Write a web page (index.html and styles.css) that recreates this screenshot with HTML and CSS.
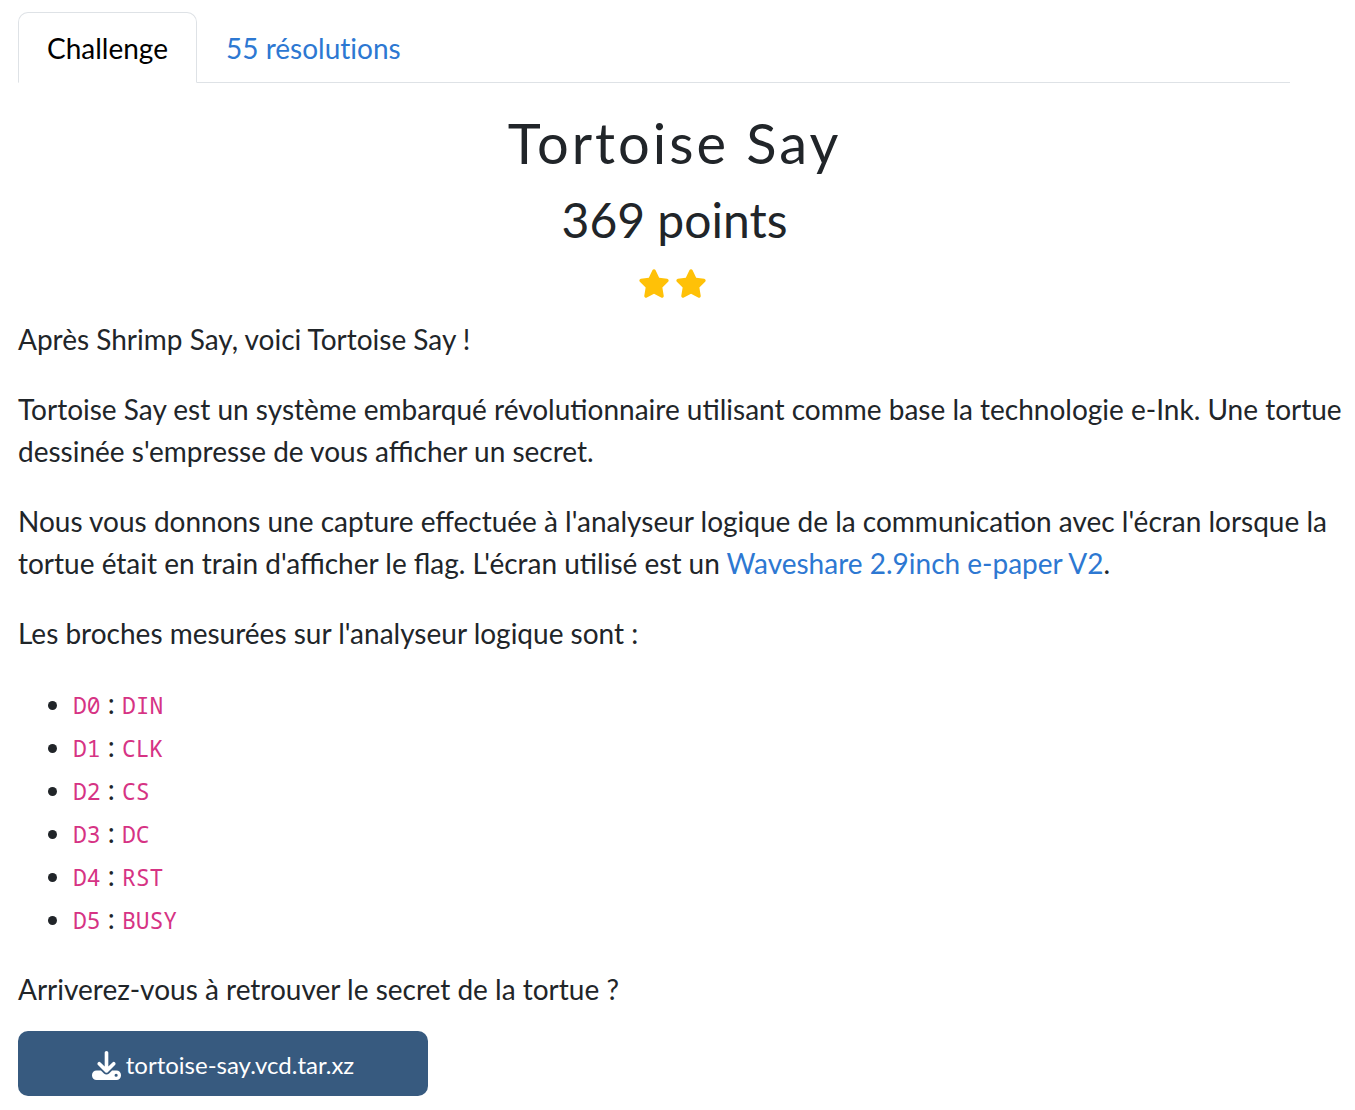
FILE: index.html
```html
<!DOCTYPE html>
<html lang="fr">
<head>
    <meta charset="UTF-8">
    <meta name="viewport" content="width=device-width, initial-scale=1.0">
    <title>Tortoise Say</title>
    <link rel="stylesheet" href="styles.css">
</head>
<body>
    <nav class="tabs">
        <a class="tab active" href="#challenge">Challenge</a>
        <a class="tab" href="#solves">55 résolutions</a>
    </nav>
    <main class="challenge" id="challenge">
        <h2 class="challenge-name">Tortoise Say</h2>
        <h3 class="challenge-value">369 points</h3>
        <div class="stars">
            <svg class="star" viewBox="0 0 576 512" aria-hidden="true"><path d="M316.900 18C311.600 7 300.400 0 288.100 0s-23.400 7-28.800 18L195 150.300 51.400 171.500c-12 1.800-22 10.200-25.700 21.700s-.7 24.200 7.900 32.700L137.800 329 113.200 474.700c-2 12 3 24.200 12.900 31.300s23 8 33.800 2.300l128.300-68.500 128.300 68.500c10.800 5.700 23.900 4.900 33.800-2.300s14.900-19.300 12.900-31.300L438.500 329 542.700 225.900c8.600-8.500 11.700-21.200 7.900-32.700s-13.700-19.900-25.700-21.700L381.200 150.300 316.900 18z"/></svg>
            <svg class="star" viewBox="0 0 576 512" aria-hidden="true"><path d="M316.900 18C311.600 7 300.400 0 288.100 0s-23.400 7-28.800 18L195 150.300 51.400 171.500c-12 1.800-22 10.200-25.700 21.700s-.7 24.200 7.900 32.700L137.800 329 113.200 474.700c-2 12 3 24.200 12.900 31.300s23 8 33.800 2.300l128.300-68.500 128.300 68.500c10.800 5.700 23.900 4.900 33.800-2.300s14.900-19.300 12.900-31.300L438.500 329 542.700 225.900c8.600-8.500 11.700-21.200 7.900-32.700s-13.700-19.900-25.700-21.700L381.200 150.300 316.900 18z"/></svg>
        </div>
        <div class="description">
            <p>Après Shrimp Say, voici Tortoise Say !</p>
            <p>Tortoise Say est un système embarqué révolutionnaire utilisant comme base la technologie e-Ink. Une tortue dessinée s'empresse de vous afficher un secret.</p>
            <p>Nous vous donnons une capture effectuée à l'analyseur logique de la communication avec l'écran lorsque la tortue était en train d'afficher le flag. L'écran utilisé est un <a href="#waveshare">Waveshare 2.9inch e-paper V2</a>.</p>
            <p>Les broches mesurées sur l'analyseur logique sont :</p>
            <ul>
                <li><code>D0</code> : <code>DIN</code></li>
                <li><code>D1</code> : <code>CLK</code></li>
                <li><code>D2</code> : <code>CS</code></li>
                <li><code>D3</code> : <code>DC</code></li>
                <li><code>D4</code> : <code>RST</code></li>
                <li><code>D5</code> : <code>BUSY</code></li>
            </ul>
            <p>Arriverez-vous à retrouver le secret de la tortue ?</p>
        </div>
        <div class="files">
            <a class="btn-file" href="#tortoise-say.vcd.tar.xz">
                <svg class="icon-download" viewBox="0 0 512 512" aria-hidden="true"><path d="M288 32c0-17.700-14.300-32-32-32s-32 14.300-32 32V274.700l-73.400-73.400c-12.500-12.500-32.800-12.500-45.300 0s-12.500 32.800 0 45.300l128 128c12.500 12.500 32.800 12.500 45.300 0l128-128c12.500-12.500 12.500-32.800 0-45.300s-32.800-12.500-45.300 0L288 274.700V32zM80 344a80 80 0 0 0-80 80v8a80 80 0 0 0 80 80H432a80 80 0 0 0 80-80v-8a80 80 0 0 0-80-80H354.500l-53.300 53.300c-25 25-65.500 25-90.500 0L157.500 344H80zm346 56a28 28 0 1 1 0 56 28 28 0 1 1 0-56z"/></svg>
                <span>tortoise-say.vcd.tar.xz</span>
            </a>
        </div>
    </main>
</body>
</html>
```

FILE: styles.css
```css
body {
    margin: 0;
    padding: 12px 24px 12px 18px;
    background-color: #fff;
    color: #212529;
    font-family: Lato, sans-serif;
    font-size: 28px;
    line-height: 42px;
}
a {
    color: #2d78d2;
    text-decoration: none;
}
.tabs {
    display: flex;
    margin-right: 41px;
    border-bottom: 1px solid #dee2e6;
    font-variant-ligatures: none;
}
.tab {
    padding: 14px 28px 13px;
    margin-bottom: -1px;
    border: 1px solid transparent;
    border-radius: 10px 10px 0 0;
}
.tab.active {
    color: #000;
    background-color: #fff;
    border-color: #dee2e6 #dee2e6 #fff;
}
.challenge-name,
.challenge-value {
    margin: 0;
    font-weight: 400;
    text-align: center;
}
.challenge-name {
    padding-top: 26px;
    font-size: 56px;
    line-height: 68px;
    letter-spacing: 3px;
}
.challenge-value {
    padding-top: 14px;
    font-size: 48px;
    line-height: 58px;
}
.stars {
    display: flex;
    justify-content: center;
    margin: 20px 0;
}
.star {
    width: 32px;
    height: 29px;
    margin-right: 5px;
    fill: #ffc107;
}
.description {
    margin-right: -16px;
}
.description p,
.description ul {
    margin: 0 0 28px;
}
.description p:last-child {
    margin-bottom: 21px;
}
.description ul {
    padding-left: 55px;
    line-height: 43px;
}
.description code {
    color: #d63384;
    font-family: "Noto Sans Mono", "DejaVu Sans Mono", monospace;
    font-size: 23px;
    line-height: 1;
}
.files {
    display: grid;
    grid-template-columns: repeat(auto-fill, minmax(200px, 410px));
}
.btn-file {
    display: flex;
    justify-content: center;
    align-items: center;
    gap: 5px;
    padding: 13px 12px 10px;
    border-radius: 10px;
    background-color: #375a7f;
    color: #fff;
    font-size: 24px;
}
.icon-download {
    width: 29px;
    height: 29px;
    fill: #fff;
}
```
